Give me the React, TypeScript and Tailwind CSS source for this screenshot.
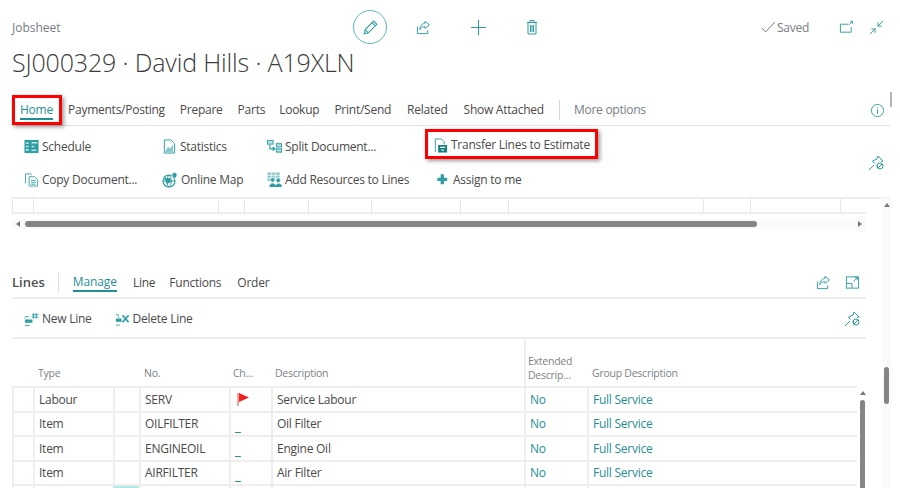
import type { ReactNode } from "react";

const FONT = "font-['Open_Sans',sans-serif]";

const Icon = ({ children, className = "w-[15px] h-[15px]" }: { children: ReactNode; className?: string }) => (
  <svg viewBox="0 0 16 16" fill="none" stroke="currentColor" strokeWidth="1" className={`shrink-0 text-[#2f9ea3] ${className}`}>
    {children}
  </svg>
);

const ShareIcon = ({ className }: { className?: string }) => (
  <Icon className={className}>
    <path d="M1.5 7v7.5h11V11" />
    <path d="M9.5 1.5l5 3.7-5 3.7V7C7 7 5 8.2 4 10.5 4 7 6 3.8 9.5 3.5z" />
  </Icon>
);

const PinIcon = () => (
  <Icon className="w-[16px] h-[16px]">
    <path d="M1 15l5-5" />
    <path d="M10 1l5 5-2 .5M10 1L9 4 4.5 6l2 2.5M9.5 12 9 9.5" />
    <circle cx="12" cy="11" r="3" />
    <path d="M10 13l4-4" />
  </Icon>
);

const ScheduleIcon = () => (
  <Icon className="w-[15px] h-[15px] text-[#0f7f85]">
    <rect x="0.500" y="1" width="15" height="14" fill="currentColor" stroke="none" />
    <path d="M2 4.500h3M2 8h3M2 11.500h3M8 4h6M8 8h3M8 12h5" stroke="#bfe3e4" strokeWidth="1.800" />
  </Icon>
);

const StatsIcon = () => (
  <Icon className="w-[15px] h-[15px] text-[#1b8a8f]">
    <path d="M2.500 15V1h7l4 4v10z" />
    <path d="M3.500 13l3-5 2 2 3.500-4.500V14h-8z" fill="currentColor" fillOpacity=".55" stroke="none" />
  </Icon>
);

const SplitIcon = () => (
  <Icon>
    <rect x="0.500" y="1.500" width="6" height="4" fill="currentColor" fillOpacity=".3" />
    <rect x="10" y="5" width="5.500" height="3.500" fill="currentColor" fillOpacity=".35" />
    <rect x="10" y="10.500" width="5.500" height="3.500" fill="currentColor" fillOpacity=".35" />
    <path d="M3 6v4.500h5M6 8.500l2.500 2-2.500 2" strokeWidth="1.200" />
  </Icon>
);

const TransferIcon = () => (
  <Icon>
    <path d="M2.500 15V1h6.500l3 3v3" />
    <rect x="5.500" y="7.500" width="9.500" height="8" fill="#137f85" stroke="none" />
    <path d="M7.500 10h5.500M9 13h2.500" stroke="#fff" strokeWidth="1.300" />
  </Icon>
);

const CopyIcon = () => (
  <Icon className="w-[15px] h-[15px] text-[#3fa6ab]">
    <path d="M1.500 12V2h6l1 1" />
    <path d="M5.500 15V5h6l3 3v7z" />
    <path d="M7.500 9h5M7.500 11h5M7.500 13h5" />
  </Icon>
);

const GlobeIcon = () => (
  <Icon className="w-[16px] h-[16px] text-[#0f7f85]">
    <circle cx="7" cy="9" r="6" strokeWidth="1.200" />
    <path d="M1 9h12M7 3c-3 3-3 9 0 12M7 3c3 3 3 9 0 12" />
    <path d="M2 6h6l1 4-4 2z" fill="currentColor" stroke="none" />
    <path d="M12.500 0.500a2.500 2.500 0 0 1 2.500 2.500c0 1.500-2.500 4-2.500 4S10 4.500 10 3a2.500 2.500 0 0 1 2.500-2.500z" fill="currentColor" stroke="#fff" strokeWidth=".6" />
  </Icon>
);

const ResourcesIcon = () => (
  <Icon className="w-[15px] h-[15px] text-[#0f7f85]">
    <rect x="0.500" y="0.500" width="13" height="9" fill="currentColor" fillOpacity=".55" stroke="none" />
    <path d="M0.500 3.500h13M0.500 6.500h13M4.500 0.500v9M9 0.500v9" stroke="#fff" strokeWidth=".8" />
    <circle cx="6" cy="8.500" r="2.300" fill="currentColor" stroke="#fff" strokeWidth=".5" />
    <circle cx="12" cy="9" r="2.300" fill="currentColor" stroke="#fff" strokeWidth=".5" />
    <path d="M2.500 16c0-5.500 7-5.500 7 0zM9 16c0-5 7-5 7 0z" fill="currentColor" stroke="none" />
  </Icon>
);

const BoldPlus = () => (
  <Icon className="w-[15px] h-[15px] text-[#0f7f85]">
    <path d="M6 2.500h3.500V6H13v3.500H9.500V13H6V9.500H2.500V6H6z" fill="currentColor" stroke="none" />
  </Icon>
);

const NewLineIcon = () => (
  <Icon className="w-[15px] h-[15px] text-[#1b8a8f]">
    <path d="M1 5h4M1 14.500h5M1 6v1" />
    <rect x="1" y="8" width="8" height="3.500" fill="currentColor" stroke="none" />
    <path d="M10 1v6M13 1v6M8.500 3h7M8.500 5.500h7" />
  </Icon>
);

const DeleteLineIcon = () => (
  <Icon className="w-[15px] h-[15px] text-[#1b8a8f]">
    <path d="M1 3h3M1 14h4M4 4v2" />
    <rect x="1" y="7" width="6" height="3.500" fill="currentColor" stroke="none" />
    <path d="M8 3.500l6.500 7.500M14.500 3.500L8 11" strokeWidth="1.800" />
  </Icon>
);

const Action = ({ icon, label }: { icon: ReactNode; label: string }) => (
  <div className="flex items-center gap-[3px] h-[24px] whitespace-nowrap">
    {icon}
    <span>{label}</span>
  </div>
);

const rows = [
  { type: "Labour", no: "SERV", desc: "Service Labour", flag: true },
  { type: "Item", no: "OILFILTER", desc: "Oil Filter", flag: false },
  { type: "Item", no: "ENGINEOIL", desc: "Engine Oil", flag: false },
  { type: "Item", no: "AIRFILTER", desc: "Air Filter", flag: false },
];

const lineCols = "grid grid-cols-[21px_80px_26px_90px_42px_253px_63px_270px]";
const lineCell = "border-l-2 border-[#eeeeee] pl-[4px] pt-[1px] flex items-center whitespace-nowrap overflow-hidden";

export default function App() {
  return (
    <div className={`relative w-[900px] h-[488px] overflow-hidden bg-white text-[12px] tracking-[-0.25px] text-[#4a4a4a] ${FONT}`}>
      {/* header */}
      <div className="flex items-center h-[54px] pl-[12px]">
        <div className="w-[341px] text-[#777d85] text-[12px] tracking-normal pt-[2px]">Jobsheet</div>
        <div className="w-[34px] h-[34px] rounded-full border border-[#5cb8bb] flex items-center justify-center">
          <Icon className="w-[17px] h-[17px]">
            <path d="M2 14l1-4 8-8 3 3-8 8z" />
            <path d="M3 10l3 3M9.500 3.500l3 3" />
          </Icon>
        </div>
        <ShareIcon className="w-[15px] h-[15px] ml-[29px]" />
        <Icon className="w-[17px] h-[17px] ml-[39px]">
          <path d="M8 1v14M1 8h14" />
        </Icon>
        <Icon className="w-[16px] h-[16px] ml-[37px]">
          <path d="M3 3.500h10M6 3V1.500h4V3M4 3.500V15h8V3.500M6.500 6v7M8 6v7M9.500 6v7" />
        </Icon>
        <svg viewBox="0 0 15 12" fill="none" stroke="#777d85" className="w-[15px] h-[12px] ml-[221px]">
          <path d="M1 7l3.500 4L14 1" />
        </svg>
        <span className="ml-[1px] w-[46px] text-[#777d85] pt-[1px]">Saved</span>
        <Icon className="w-[15px] h-[15px] ml-[16px]">
          <path d="M13 7.500V13H1.500V4.500H10" />
          <path d="M11 5l3-3M12 1.500h2.500V4" />
        </Icon>
        <Icon className="w-[15px] h-[15px] ml-[15px]">
          <path d="M15 1L9.500 6.500M9.500 2.500v4h4M1 15l5.500-5.500M2.500 9.500h4v4" />
        </Icon>
      </div>

      <h1 className="pl-[12px] h-[41px] text-[25px] leading-[16px] tracking-[-0.15px] font-light text-[#3c3c3c] whitespace-nowrap">
        SJ000329 · David Hills · A19XLN
      </h1>

      {/* tabs */}
      <div className="flex items-center h-[31px] ml-[12px] w-[878px] border-b border-[#e3e3e3] whitespace-nowrap">
        <div className="w-[50px] h-[30px] border-[3px] border-[#ff0000] shadow-[2px_2px_4px_rgba(0,0,0,0.4)] pl-[5px] flex items-center">
          <span className="text-[#1f8f94] border-b-2 border-[#1f8f94] leading-[17px]">Home</span>
        </div>
        <span className="ml-[6px]">Payments/Posting</span>
        <span className="ml-[15px]">Prepare</span>
        <span className="ml-[15px]">Parts</span>
        <span className="ml-[14px]">Lookup</span>
        <span className="ml-[15px]">Print/Send</span>
        <span className="ml-[16px]">Related</span>
        <span className="ml-[16px]">Show Attached</span>
        <div className="ml-[15px] w-px h-[20px] bg-[#d5d8dc]" />
        <span className="ml-[14px] text-[#777d85]">More options</span>
        <Icon className="w-[15px] h-[15px] ml-auto mr-[5px]">
          <circle cx="8" cy="8" r="6.500" />
          <path d="M8 7v4.500M8 4.500v1" strokeWidth="1.200" />
        </Icon>
      </div>

      {/* action bar */}
      <div className="relative h-[71px] pl-[24px] pt-[4px]">
        <div className="grid grid-cols-[138px_105px_168px_1fr] auto-rows-[33px] items-center">
          <Action icon={<ScheduleIcon />} label="Schedule" />
          <Action icon={<StatsIcon />} label="Statistics" />
          <Action icon={<SplitIcon />} label="Split Document..." />
          <div className="-ml-[10px] -mt-[1px] self-start w-[173px] h-[30px] border-[3px] border-[#ff0000] shadow-[2px_2px_4px_rgba(0,0,0,0.4)] pl-[5px] pt-[2px] flex items-center">
            <Action icon={<TransferIcon />} label="Transfer Lines to Estimate" />
          </div>
          <Action icon={<CopyIcon />} label="Copy Document..." />
          <Action icon={<GlobeIcon />} label="Online Map" />
          <Action icon={<ResourcesIcon />} label="Add Resources to Lines" />
          <Action icon={<BoldPlus />} label="Assign to me" />
        </div>
        <div className="absolute right-[16px] top-[29px]">
          <PinIcon />
        </div>
      </div>

      {/* stub of the table above, scrolled away */}
      <div className="ml-[12px] w-[878px] border-t-2 border-[#eeeeee]">
        <div className="w-[854px] h-[15px] border-b-2 border-[#eeeeee] grid grid-cols-[21px_185px_26px_64px_63px_89px_48px_195px_47px_90px_26px]">
          {Array.from({ length: 11 }).map((_, i) => (
            <div key={i} className="border-l border-[#e6e6e6]" />
          ))}
        </div>
      </div>
      <div className="ml-[12px] mt-[5px] w-[854px] h-[10px] bg-[#fafafa] flex items-center">
        <div className="ml-[4px] w-0 h-0 border-y-[3px] border-y-transparent border-r-[4px] border-r-[#777]" />
        <div className="ml-[5px] w-[732px] h-[6px] rounded-full bg-[#858585]" />
        <div className="ml-auto mr-[4px] w-0 h-0 border-y-[3px] border-y-transparent border-l-[4px] border-l-[#777]" />
      </div>

      {/* lines part */}
      <div className="ml-[12px] w-[854px] mt-[41px]">
        <div className="flex items-center h-[29px] pb-[2px] border-b-2 border-[#eeeeee] whitespace-nowrap">
          <span className="font-semibold text-[#505050] text-[13px] tracking-normal">Lines</span>
          <div className="ml-[13px] w-px h-[20px] bg-[#e0e0e0]" />
          <span className="ml-[14px] text-[#1f8f94] border-b-2 border-[#1f8f94] leading-[17px] tracking-[-0.1px]">Manage</span>
          <span className="ml-[16px]">Line</span>
          <span className="ml-[14px]">Functions</span>
          <span className="ml-[16px]">Order</span>
          <ShareIcon className="w-[15px] h-[15px] ml-auto" />
          <Icon className="w-[15px] h-[15px] ml-[14px] mr-[6px]">
            <rect x="1.500" y="2" width="13" height="12" />
            <path d="M1.500 9h6v5M9 7l4-4M10.500 2.500h3v3" />
          </Icon>
        </div>
        <div className="flex items-center justify-between h-[40px] pt-[2px] pl-[12px] pr-[6px] border-b-2 border-[#eeeeee]">
          <div className="flex gap-[23px]">
            <Action icon={<NewLineIcon />} label="New Line" />
            <Action icon={<DeleteLineIcon />} label="Delete Line" />
          </div>
          <PinIcon />
        </div>

        <div className={`${lineCols} w-[845px] h-[49px] border-b-2 border-[#eeeeee] text-[10.5px] text-[#7b8288]`}>
          <div />
          <div className="pl-[5px] flex items-center mt-[22px]">Type</div>
          <div />
          <div className="pl-[5px] flex items-center mt-[22px]">No.</div>
          <div className="pl-[4px] flex items-center mt-[22px]">Ch...</div>
          <div className="pl-[4px] flex items-center mt-[22px]">Description</div>
          <div className="border-l-2 border-[#eeeeee] pl-[2px] pt-[15px] leading-[14px]">
            Extended
            <br />
            Descrip...
          </div>
          <div className="pl-[5px] flex items-center mt-[22px]">Group Description</div>
        </div>

        <div className="flex">
          <div className="w-[845px]">
            {rows.map((r) => (
              <div key={r.no} className={`${lineCols} h-[24.5px] border-b-2 border-[#eeeeee]`}>
                <div className={lineCell} />
                <div className={lineCell}>{r.type}</div>
                <div className={lineCell} />
                <div className={lineCell}>{r.no}</div>
                <div className={lineCell}>
                  {r.flag ? (
                    <svg viewBox="0 0 12 13" className="w-[12px] h-[13px] ml-[2px]">
                      <rect x="0" y="0" width="2" height="13" fill="#f8a0a0" />
                      <path d="M2 0l10 4.500L2 9z" fill="#f02020" />
                    </svg>
                  ) : (
                    <span className="text-[#1f8f94] font-bold text-[14px] mt-[2px]">_</span>
                  )}
                </div>
                <div className={lineCell}>{r.desc}</div>
                <div className={`${lineCell} text-[#1f8f94]`}>No</div>
                <div className={`${lineCell} text-[#1f8f94]`}>Full Service</div>
              </div>
            ))}
            <div className={`${lineCols} h-[5px]`}>
              <div className={lineCell} />
              <div className={lineCell} />
              <div className="bg-[#b2e8e8]" />
              <div className={lineCell} />
              <div className={lineCell} />
              <div className={lineCell} />
              <div className={lineCell} />
              <div className={lineCell} />
            </div>
          </div>
          <div className="w-[9px] pt-[3px] pl-[2px] flex flex-col items-center">
            <div className="w-0 h-0 border-x-[3px] border-x-transparent border-b-[4px] border-b-[#777]" />
            <div className="mt-[5px] w-[5px] h-[90px] rounded-full bg-[#858585]" />
          </div>
        </div>
      </div>

      {/* page scrollbars */}
      <div className="absolute left-[890px] top-[92px] w-[2px] h-[15px] bg-[#b5b5b5]" />
      <div className="absolute left-[882px] top-[198px] bottom-0 w-[9px] bg-[#fafafa] flex flex-col items-center">
        <div className="mt-[5px] w-0 h-0 border-x-[3px] border-x-transparent border-b-[4px] border-b-[#777]" />
        <div className="mt-[160px] w-[5px] h-[37px] rounded-full bg-[#858585]" />
      </div>
    </div>
  );
}
